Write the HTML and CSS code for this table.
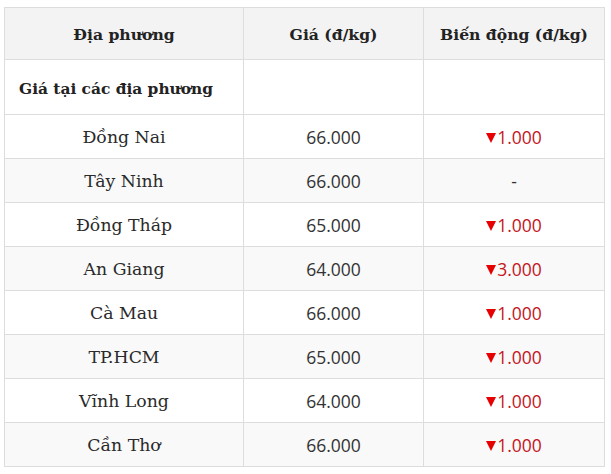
FILE: index.html
```html
<!DOCTYPE html>
<html lang="vi">
<head>
<meta charset="utf-8">
<link rel="stylesheet" href="styles.css">
</head>
<body>
<table class="price-table">
  <colgroup>
    <col class="c1"><col class="c2"><col class="c3">
  </colgroup>
  <thead>
    <tr><th>Địa phương</th><th>Giá (đ/kg)</th><th>Biến động (đ/kg)</th></tr>
  </thead>
  <tbody>
    <tr class="section"><td class="sec-title">Giá tại các địa phương</td><td></td><td></td></tr>
    <tr><td class="place">Đồng Nai</td><td class="num">66.000</td><td class="num down"><span class="tri" aria-label="▼"></span>1.000</td></tr>
    <tr class="alt"><td class="place">Tây Ninh</td><td class="num">66.000</td><td class="num">-</td></tr>
    <tr><td class="place">Đồng Tháp</td><td class="num">65.000</td><td class="num down"><span class="tri" aria-label="▼"></span>1.000</td></tr>
    <tr class="alt"><td class="place">An Giang</td><td class="num">64.000</td><td class="num down"><span class="tri" aria-label="▼"></span>3.000</td></tr>
    <tr><td class="place">Cà Mau</td><td class="num">66.000</td><td class="num down"><span class="tri" aria-label="▼"></span>1.000</td></tr>
    <tr class="alt"><td class="place">TP.HCM</td><td class="num">65.000</td><td class="num down"><span class="tri" aria-label="▼"></span>1.000</td></tr>
    <tr><td class="place">Vĩnh Long</td><td class="num">64.000</td><td class="num down"><span class="tri" aria-label="▼"></span>1.000</td></tr>
    <tr class="alt"><td class="place">Cần Thơ</td><td class="num">66.000</td><td class="num down"><span class="tri" aria-label="▼"></span>1.000</td></tr>
  </tbody>
</table>
</body>
</html>
```

FILE: styles.css
```css
html, body { background: #ffffff; }
body {
  margin: 7px 0 0 4px;
  font-family: "DejaVu Serif", serif;
  color: #222;
}
.price-table {
  border-collapse: collapse;
  width: 600px;
  table-layout: fixed;
}
.c1 { width: 239px; }
.c2 { width: 180px; }
.c3 { width: 181px; }
.price-table th, .price-table td {
  border: 1px solid #dddddd;
  text-align: center;
  padding: 0 8px;
}
.price-table th {
  background: #f3f3f3;
  height: 49px;
  padding-top: 2px;
  font-weight: bold;
  font-size: 15.6px;
  color: #222;
}
.price-table td.sec-title {
  text-align: left;
  padding: 3px 8px 0 14px;
  font-weight: bold;
  font-size: 15.4px;
  color: #222;
  background: #fff;
}
.price-table tbody tr td { height: 43px; }
.price-table tbody tr.section td { height: 51px; }
.price-table tbody tr.section td:not(.sec-title) { height: 54px; }
.alt td { background: #f9f9f9; }
.place { font-size: 17.3px; color: #2a2a2a; }
.num {
  font-family: "Open Sans", "Noto Sans", sans-serif;
  font-size: 17.5px;
  color: #333;
}
.down { color: #c4161c; }
.tri {
  display: inline-block;
  width: 0;
  height: 0;
  border-left: 5.5px solid transparent;
  border-right: 5.5px solid transparent;
  border-top: 10px solid #e60000;
  margin-right: 1px;
  vertical-align: 1px;
}
```
